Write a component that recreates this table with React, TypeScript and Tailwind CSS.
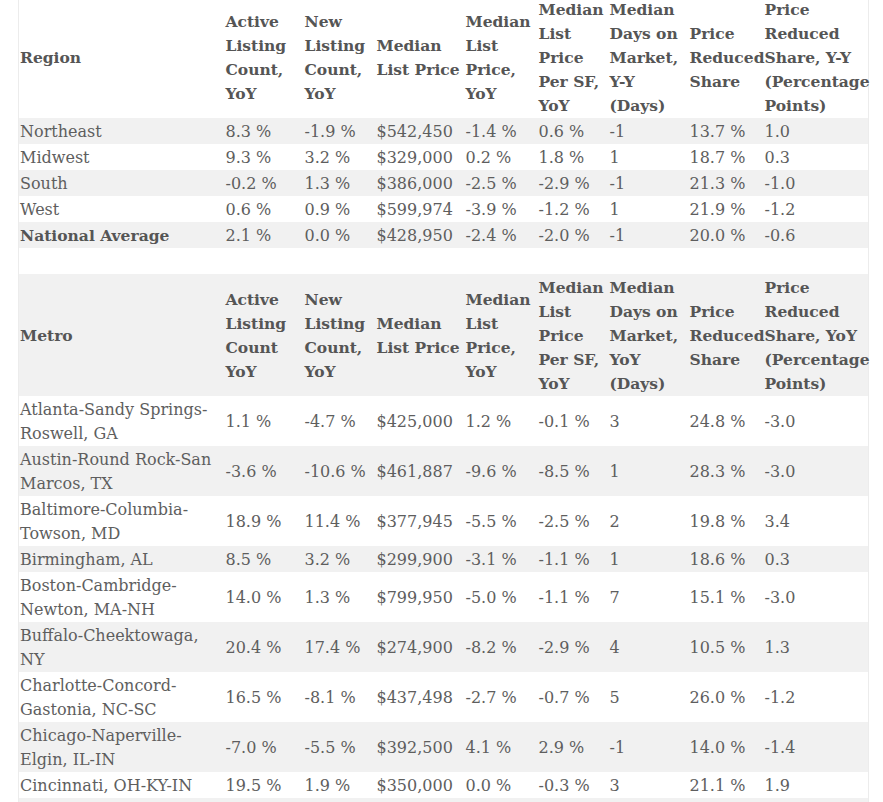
import React from 'react';

type Row = { name: string[]; values: string[]; bold?: boolean };

const regionHead: string[][] = [
  ['Region'],
  ['Active', 'Listing', 'Count,', 'YoY'],
  ['New', 'Listing', 'Count,', 'YoY'],
  ['Median', 'List Price'],
  ['Median', 'List', 'Price,', 'YoY'],
  ['Median', 'List', 'Price', 'Per SF,', 'YoY'],
  ['Median', 'Days on', 'Market,', 'Y-Y', '(Days)'],
  ['Price', 'Reduced', 'Share'],
  ['Price', 'Reduced', 'Share, Y-Y', '(Percentage', 'Points)'],
];

const metroHead: string[][] = [
  ['Metro'],
  ['Active', 'Listing', 'Count', 'YoY'],
  ['New', 'Listing', 'Count,', 'YoY'],
  ['Median', 'List Price'],
  ['Median', 'List', 'Price,', 'YoY'],
  ['Median', 'List', 'Price', 'Per SF,', 'YoY'],
  ['Median', 'Days on', 'Market,', 'YoY', '(Days)'],
  ['Price', 'Reduced', 'Share'],
  ['Price', 'Reduced', 'Share, YoY', '(Percentage', 'Points)'],
];

const regions: Row[] = [
  { name: ['Northeast'], values: ['8.3 %', '-1.9 %', '$542,450', '-1.4 %', '0.6 %', '-1', '13.7 %', '1.0'] },
  { name: ['Midwest'], values: ['9.3 %', '3.2 %', '$329,000', '0.2 %', '1.8 %', '1', '18.7 %', '0.3'] },
  { name: ['South'], values: ['-0.2 %', '1.3 %', '$386,000', '-2.5 %', '-2.9 %', '-1', '21.3 %', '-1.0'] },
  { name: ['West'], values: ['0.6 %', '0.9 %', '$599,974', '-3.9 %', '-1.2 %', '1', '21.9 %', '-1.2'] },
  { name: ['National Average'], bold: true, values: ['2.1 %', '0.0 %', '$428,950', '-2.4 %', '-2.0 %', '-1', '20.0 %', '-0.6'] },
];

const metros: Row[] = [
  { name: ['Atlanta-Sandy Springs-', 'Roswell, GA'], values: ['1.1 %', '-4.7 %', '$425,000', '1.2 %', '-0.1 %', '3', '24.8 %', '-3.0'] },
  { name: ['Austin-Round Rock-San', 'Marcos, TX'], values: ['-3.6 %', '-10.6 %', '$461,887', '-9.6 %', '-8.5 %', '1', '28.3 %', '-3.0'] },
  { name: ['Baltimore-Columbia-', 'Towson, MD'], values: ['18.9 %', '11.4 %', '$377,945', '-5.5 %', '-2.5 %', '2', '19.8 %', '3.4'] },
  { name: ['Birmingham, AL'], values: ['8.5 %', '3.2 %', '$299,900', '-3.1 %', '-1.1 %', '1', '18.6 %', '0.3'] },
  { name: ['Boston-Cambridge-', 'Newton, MA-NH'], values: ['14.0 %', '1.3 %', '$799,950', '-5.0 %', '-1.1 %', '7', '15.1 %', '-3.0'] },
  { name: ['Buffalo-Cheektowaga,', 'NY'], values: ['20.4 %', '17.4 %', '$274,900', '-8.2 %', '-2.9 %', '4', '10.5 %', '1.3'] },
  { name: ['Charlotte-Concord-', 'Gastonia, NC-SC'], values: ['16.5 %', '-8.1 %', '$437,498', '-2.7 %', '-0.7 %', '5', '26.0 %', '-1.2'] },
  { name: ['Chicago-Naperville-', 'Elgin, IL-IN'], values: ['-7.0 %', '-5.5 %', '$392,500', '4.1 %', '2.9 %', '-1', '14.0 %', '-1.4'] },
  { name: ['Cincinnati, OH-KY-IN'], values: ['19.5 %', '1.9 %', '$350,000', '0.0 %', '-0.3 %', '3', '21.1 %', '1.9'] },
];

const colWidths = ['w-[206px]', 'w-[79px]', 'w-[72px]', 'w-[89px]', 'w-[73px]', 'w-[71px]', 'w-[80px]', 'w-[75px]', 'w-[105px]'];

function Lines({ lines }: { lines: string[] }) {
  return (
    <>
      {lines.map((l, i) => (
        <span key={i} className="block whitespace-nowrap">
          {l}
        </span>
      ))}
    </>
  );
}

function HeadRow({ cells }: { cells: string[][] }) {
  return (
    <tr>
      {cells.map((c, i) => (
        <th key={i} className="pl-px pr-[2px] pt-[2px] pb-0 text-left align-middle font-bold text-[15.5px] text-[#555]">
          <Lines lines={c} />
        </th>
      ))}
    </tr>
  );
}

function DataRow({ row }: { row: Row }) {
  return (
    <tr>
      <td className={`pl-px pr-[2px] pt-[2px] pb-0 align-middle ${row.bold ? 'font-bold text-[15.5px] text-[#555]' : ''}`}>
        <Lines lines={row.name} />
      </td>
      {row.values.map((v, i) => (
        <td key={i} className="pl-px pr-[2px] pt-[2px] pb-0 align-middle whitespace-nowrap">
          {v}
        </td>
      ))}
    </tr>
  );
}

export default function App() {
  return (
    <div className="min-h-screen bg-white overflow-hidden">
      <div className="-mt-[4px] pl-[18px]">
        <table
          className="table-fixed border-collapse border-x border-[#ececec] w-[850px] text-[16px] leading-6 text-[#5e5e5e] [&_tr:nth-child(even)]:bg-[#f1f1f1]"
          style={{ fontFamily: '"DejaVu Serif", "Liberation Serif", serif' }}
        >
          <colgroup>
            {colWidths.map((w, i) => (
              <col key={i} className={w} />
            ))}
          </colgroup>
          <tbody>
            <HeadRow cells={regionHead} />
            {regions.map((r, i) => (
              <DataRow key={i} row={r} />
            ))}
            <tr>
              <td colSpan={9} className="px-[2px] py-px">
                &nbsp;
              </td>
            </tr>
            <HeadRow cells={metroHead} />
            {metros.map((r, i) => (
              <DataRow key={i} row={r} />
            ))}
            <tr>
              <td colSpan={9} className="px-[2px] py-px">
                &nbsp;
              </td>
            </tr>
          </tbody>
        </table>
      </div>
    </div>
  );
}
